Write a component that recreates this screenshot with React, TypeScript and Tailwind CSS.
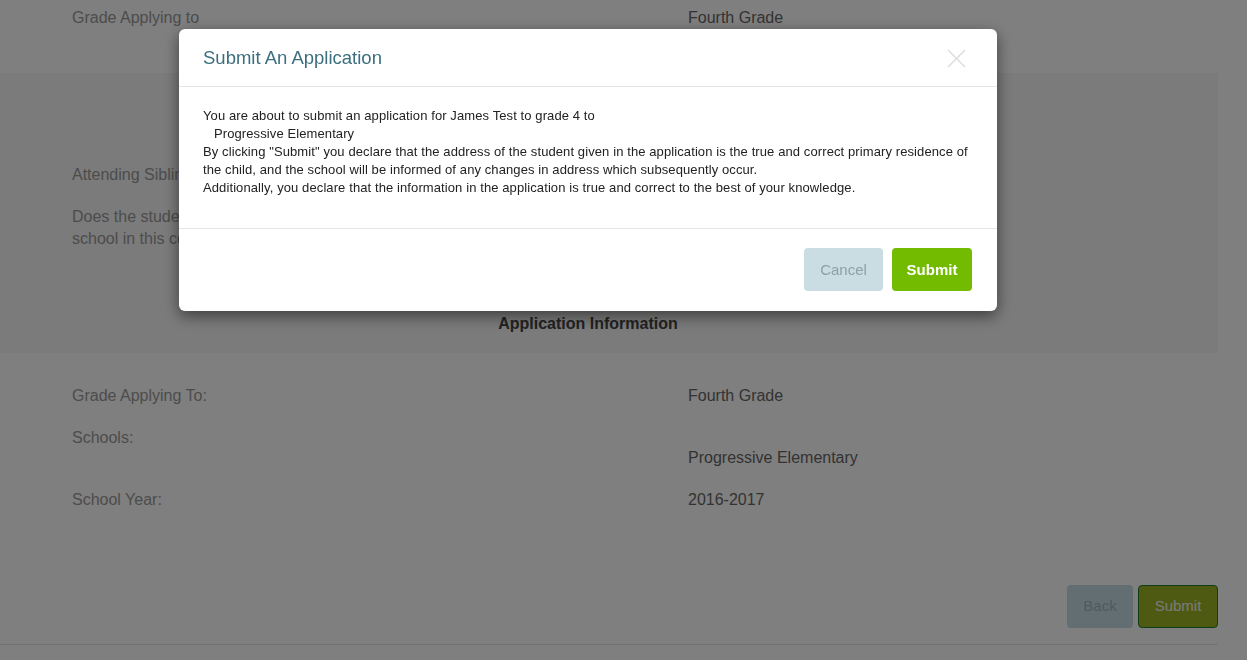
import React from 'react';

const rowCls = 'grid grid-cols-[616px_1fr] pl-[72px] text-[16px] leading-[22px]';

export default function App() {
  return (
    <div className="relative min-h-screen bg-white font-['Liberation_Sans',Arial,sans-serif] overflow-hidden">
      {/* Page behind the modal */}
      <div className="w-[1218px] border-b border-[#e6e6e6]">
        <div className={`${rowCls} h-[73px] pt-[7px]`}>
          <span className="text-[#999]">Grade Applying to</span>
          <span className="text-[#666]">Fourth Grade</span>
        </div>

        <div className="bg-[#f6f6f6] h-[280px] pt-[91px]">
          <div className={rowCls}>
            <span className="text-[#999]">Attending Siblings:</span>
          </div>
          <div className={`${rowCls} mt-[20px]`}>
            <span className="text-[#999]">
              Does the student have a sibling attending this
              <br />
              school in this coming school year?
            </span>
          </div>
          <h3 className="mt-[63px] text-center pr-[42px] text-[16px] leading-[22px] font-bold text-[#444]">
            Application Information
          </h3>
        </div>

        <div className="pt-[32px]">
          <div className={rowCls}>
            <span className="text-[#999]">Grade Applying To:</span>
            <span className="text-[#666]">Fourth Grade</span>
          </div>
          <div className={`${rowCls} mt-[20px]`}>
            <span className="text-[#999]">Schools:</span>
            <span className="text-[#666] pt-[20px]">Progressive Elementary</span>
          </div>
          <div className={`${rowCls} mt-[20px]`}>
            <span className="text-[#999]">School Year:</span>
            <span className="text-[#666]">2016-2017</span>
          </div>
        </div>

        <div className="flex justify-end gap-[5px] mt-[74px] mb-[16px]">
          <button className="w-[66px] h-[43px] rounded-[4px] bg-[#c6dde6] text-[#9ab4c0] text-[15px]">
            Back
          </button>
          <button className="w-[80px] h-[43px] rounded-[4px] bg-[#9db522] border border-[#1f7a2a] text-[#f4f4f4] text-[15px]">
            Submit
          </button>
        </div>
      </div>

      {/* Overlay + modal */}
      <div className="fixed inset-0 bg-black/50">
        <div className="ml-[179px] mt-[29px] w-[818px] bg-white rounded-[6px] shadow-[0_5px_15px_rgba(0,0,0,0.5)]">
          <div className="h-[58px] flex items-center justify-between pl-[24px] pr-[31px] pt-[1px] border-b border-[#e5e5e5]">
            <h2 className="text-[18.5px] text-[#3b6e7e] font-normal">Submit An Application</h2>
            <svg width="19" height="19" viewBox="0 0 19 19" className="text-[#dcdcdc]">
              <path d="M1 1L18 18M18 1L1 18" stroke="currentColor" strokeWidth="1.4" fill="none" />
            </svg>
          </div>
          <div className="px-[24px] pt-[20px] pb-[31px] text-[13px] leading-[18px] text-[#222] tracking-[0.1px] border-b border-[#e5e5e5]">
            <p>You are about to submit an application for James Test to grade 4 to</p>
            <p className="pl-[11px]">Progressive Elementary</p>
            <p>
              By clicking "Submit" you declare that the address of the student given in the application is the true and correct primary residence of
              the child, and the school will be informed of any changes in address which subsequently occur.
            </p>
            <p>Additionally, you declare that the information in the application is true and correct to the best of your knowledge.</p>
          </div>
          <div className="flex justify-end gap-[9px] pt-[19px] pb-[20px] pr-[25px]">
            <button className="w-[79px] h-[43px] rounded-[4px] bg-[#c9dde3] text-[#8ea0a8] text-[15px] pt-[1px]">
              Cancel
            </button>
            <button className="w-[80px] h-[43px] rounded-[4px] bg-[#72bb00] text-white font-bold text-[15px] pt-[1px]">
              Submit
            </button>
          </div>
        </div>
      </div>
    </div>
  );
}
